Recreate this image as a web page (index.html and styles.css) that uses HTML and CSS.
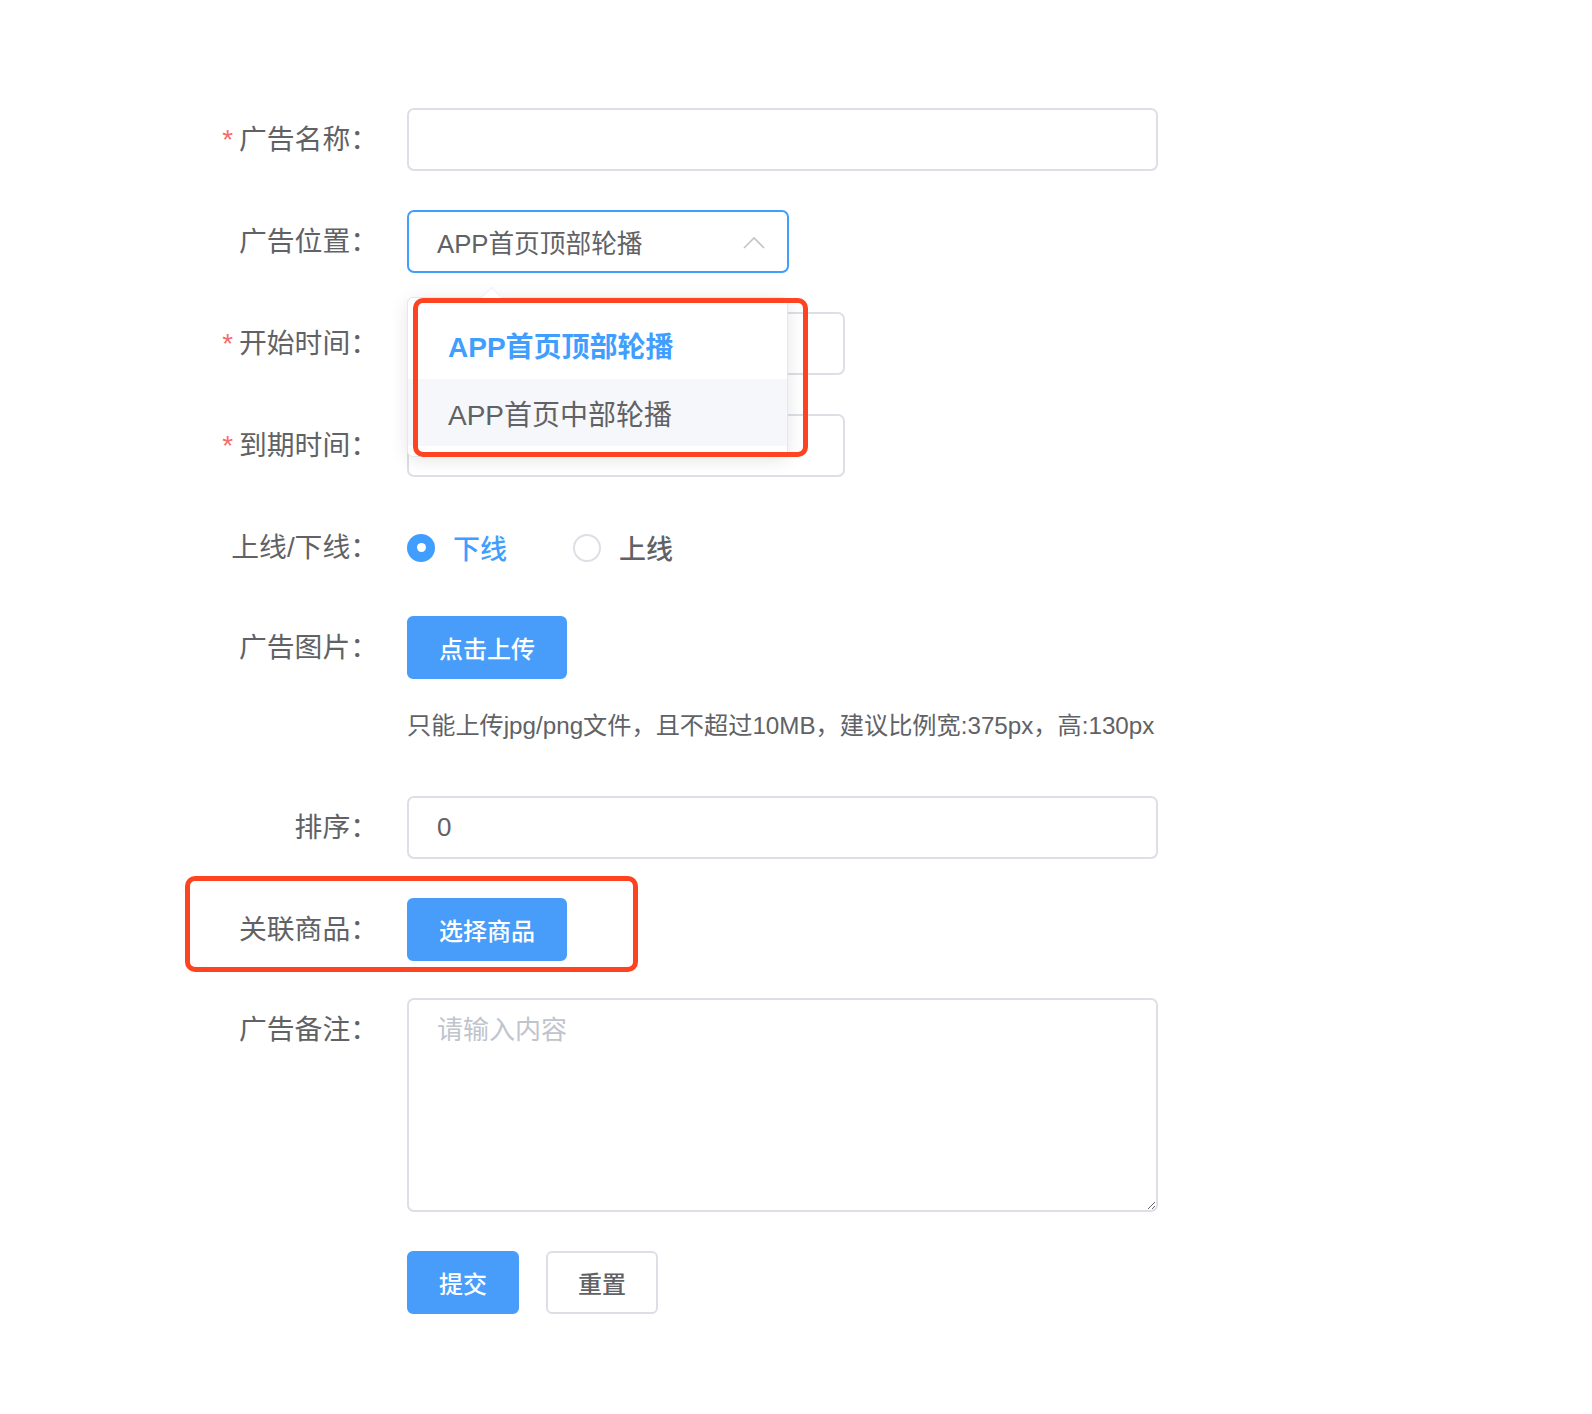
FILE: index.html
```html
<!DOCTYPE html>
<html lang="zh-CN">
<head>
<meta charset="utf-8">
<title>广告编辑</title>
<link rel="stylesheet" href="styles.css">
</head>
<body>
<form class="form">
  <div class="item">
    <label class="label req">广告名称：</label>
    <div class="content"><input class="input full" type="text"></div>
  </div>

  <div class="item">
    <label class="label">广告位置：</label>
    <div class="content">
      <div class="select">
        <span class="select-text">APP首页顶部轮播</span>
        <svg class="arrow" width="22" height="13" viewBox="0 0 22 13"><path d="M1 12 L11 2 L21 12" fill="none" stroke="#c0c4cc" stroke-width="1.6"/></svg>
        <div class="dropdown">
          <div class="option selected">APP首页顶部轮播</div>
          <div class="option hover">APP首页中部轮播</div>
        </div>
        <div class="mark mark-1"></div>
      </div>
    </div>
  </div>

  <div class="item">
    <label class="label req">开始时间：</label>
    <div class="content"><input class="input date" type="text"></div>
  </div>

  <div class="item">
    <label class="label req">到期时间：</label>
    <div class="content"><input class="input date" type="text"></div>
  </div>

  <div class="item">
    <label class="label">上线/下线：</label>
    <div class="content radios">
      <span class="radio checked"><span class="dot"></span><span class="radio-label">下线</span></span>
      <span class="radio"><span class="dot"></span><span class="radio-label">上线</span></span>
    </div>
  </div>

  <div class="item upload-item">
    <label class="label">广告图片：</label>
    <div class="content">
      <button type="button" class="btn primary upload">点击上传</button>
      <div class="tip">只能上传jpg/png文件，且不超过10MB，建议比例宽:375px，高:130px</div>
    </div>
  </div>

  <div class="item">
    <label class="label">排序：</label>
    <div class="content"><input class="input full" type="text" value="0"></div>
  </div>

  <div class="item goods-item">
    <div class="mark mark-2"></div>
    <label class="label">关联商品：</label>
    <div class="content"><button type="button" class="btn primary upload">选择商品</button></div>
  </div>

  <div class="item">
    <label class="label">广告备注：</label>
    <div class="content"><textarea class="textarea" placeholder="请输入内容"></textarea></div>
  </div>

  <div class="item actions">
    <div class="label"></div>
    <div class="content buttons">
      <button type="button" class="btn primary small">提交</button>
      <button type="button" class="btn plain small">重置</button>
    </div>
  </div>
</form>
</body>
</html>
```

FILE: styles.css
```css
* { box-sizing: border-box; }

body {
  margin: 0;
  background: #fff;
  font-family: "Liberation Sans", "Noto Sans CJK SC", sans-serif;
  color: #606266;
}

.form {
  padding-top: 108px;
  padding-bottom: 80px;
}

.item {
  display: flex;
  align-items: flex-start;
  margin-bottom: 39px;
  position: relative;
}

.label {
  width: 407px;
  flex-shrink: 0;
  padding-right: 29px;
  text-align: right;
  font-size: 27.8px;
  line-height: 63px;
  color: #606266;
  white-space: nowrap;
}

.req::before {
  content: "*";
  color: #f56c6c;
  margin-right: 6px;
}

.content {
  position: relative;
}

.input {
  display: block;
  height: 63px;
  border: 2px solid #dcdfe6;
  border-radius: 7px;
  background: #fff;
  padding: 0 0 0 28px;
  font-family: inherit;
  font-size: 26px;
  color: #606266;
  outline: none;
}

.full { width: 751px; }
.date { width: 438px; }

.select {
  position: relative;
  width: 382px;
  height: 63px;
  border: 2px solid #409eff;
  border-radius: 7px;
  padding-left: 28px;
  display: flex;
  align-items: center;
  font-size: 25.7px;
}

.arrow {
  position: absolute;
  right: 22px;
  top: 24px;
}

.dropdown {
  position: absolute;
  left: -2px;
  top: 85px;
  width: 381px;
  background: #fff;
  border: 1px solid #e4e7ed;
  border-radius: 6px;
  box-shadow: 0 3px 18px rgba(0, 0, 0, 0.1);
  padding: 14px 0 10px;
  z-index: 5;
}

.dropdown::before {
  content: "";
  position: absolute;
  left: 76px;
  top: -8px;
  width: 14px;
  height: 14px;
  background: #fff;
  border-top: 1px solid #ebeef5;
  border-left: 1px solid #ebeef5;
  transform: rotate(45deg);
}

.option {
  height: 67px;
  padding-left: 40px;
  font-size: 28px;
  color: #606266;
  white-space: nowrap;
}

.option.selected {
  color: #409eff;
  font-weight: 700;
  line-height: 72px;
}

.option.hover {
  background: #f5f7fa;
  line-height: 74px;
}

.mark {
  position: absolute;
  border: 5px solid #fe4321;
  border-radius: 10px;
  z-index: 6;
}

.mark-1 {
  left: 4px;
  top: 86px;
  width: 395px;
  height: 159px;
}

.mark-2 {
  left: 185px;
  top: -22px;
  width: 453px;
  height: 96px;
}

.radios {
  display: flex;
  align-items: center;
  height: 63px;
}

.radio {
  display: flex;
  align-items: center;
  margin-right: 66px;
}

.dot {
  width: 28px;
  height: 28px;
  border-radius: 50%;
  border: 2px solid #dcdfe6;
  background: #fff;
  position: relative;
  margin-right: 18px;
}

.radio.checked .dot {
  border-color: #409eff;
  background: #409eff;
}

.radio.checked .dot::after {
  content: "";
  position: absolute;
  left: 50%;
  top: 50%;
  width: 9px;
  height: 9px;
  margin: -4.5px 0 0 -4.5px;
  border-radius: 50%;
  background: #fff;
}

.radio-label {
  font-size: 27px;
  font-weight: 500;
  color: #606266;
}

.radio.checked .radio-label {
  color: #409eff;
}

.btn {
  display: block;
  height: 63px;
  border-radius: 6px;
  font-family: inherit;
  font-size: 24px;
  font-weight: 500;
  cursor: pointer;
  padding: 0;
}

.primary {
  background: #489dfa;
  border: 2px solid #489dfa;
  color: #fff;
}

.plain {
  background: #fff;
  border: 2px solid #dcdfe6;
  color: #606266;
}

.upload { width: 160px; }
.small { width: 112px; }

.upload-item { margin-top: -2px; }

.tip {
  padding-top: 25px;
  line-height: 44px;
  height: 78px;
  font-size: 24.2px;
  color: #606266;
  white-space: nowrap;
}

.goods-item { margin-bottom: 37px; }

.textarea {
  display: block;
  width: 751px;
  height: 214px;
  border: 2px solid #dcdfe6;
  border-radius: 7px;
  padding: 12px 28px 10px;
  font-family: inherit;
  font-size: 26px;
  line-height: 1.45;
  color: #606266;
  outline: none;
  resize: vertical;
}

.textarea::placeholder {
  color: #c0c4cc;
}

.buttons {
  display: flex;
  gap: 27px;
}
```
